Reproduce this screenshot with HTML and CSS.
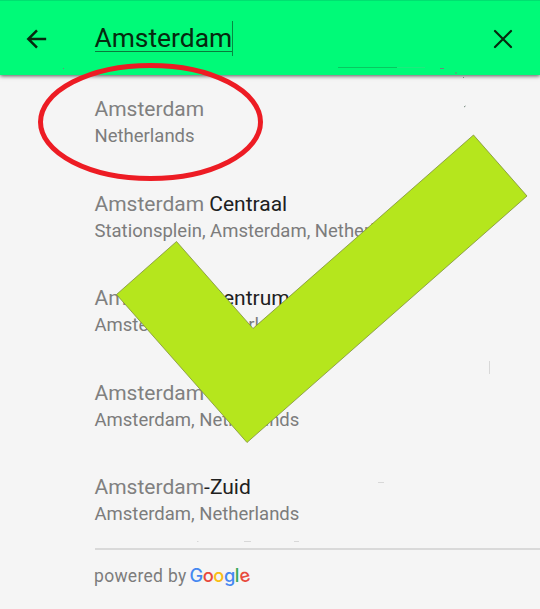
FILE: index.html
```html
<!DOCTYPE html>
<html lang="en">
<head>
<meta charset="utf-8">
<title>Place search</title>
<link rel="stylesheet" href="styles.css">
</head>
<body>
<div class="screen">
  <header class="bar">
    <svg class="icon back" viewBox="0 0 24 24"><path d="M22 12H3M12 2.5L2.5 12L12 21.5"/></svg>
    <div class="query"><span class="query-text">Amsterdam</span><span class="caret"></span></div>
    <svg class="icon close" viewBox="0 0 20 20"><path d="M2 2L18 18M18 2L2 18"/></svg>
  </header>
  <ul class="results">
    <li><div class="name">Amsterdam</div><div class="place">Netherlands</div></li>
    <li><div class="name">Amsterdam <b>Centraal</b></div><div class="place">Stationsplein, Amsterdam, Netherlands</div></li>
    <li><div class="name">Amsterdam <b>Centrum</b></div><div class="place">Amsterdam, Netherlands</div></li>
    <li><div class="name">Amsterdam</div><div class="place">Amsterdam, Netherlands</div></li>
    <li><div class="name">Amsterdam<b>-Zuid</b></div><div class="place">Amsterdam, Netherlands</div></li>
  </ul>
  <footer class="credit">
    <span class="powered">powered by</span>
    <span class="google"><span class="blue">G</span><span class="red">o</span><span class="yellow">o</span><span class="blue">g</span><span class="green">l</span><span class="red e">e</span></span>
  </footer>
  <svg class="marks" viewBox="0 0 540 609">
    <path class="check" d="M116.500 294.500L176.500 241.500L253 328.500L473.500 135L527 196L247 442.500Z"/>
    <ellipse class="ring" cx="150.500" cy="122" rx="110" ry="56.500"/>
    <path class="streak" d="M338 67.500H397"/>
    <path class="streak light" d="M397 67.500H425"/>
    <path class="speck" d="M440 68.500H444M455 73H457M463 77.500H464M464 107L465.500 106M63 68.500H64"/>
    <path class="dash" d="M489.500 361V374M378 482.500H384M197 541.500H198.500M244 541.500H251M294 541.500H299"/>
  </svg>
</div>
</body>
</html>
```
FILE: styles.css
```css
* { box-sizing: border-box; }
body { margin: 0; font-family: Roboto, sans-serif; }
.screen {
  position: relative;
  width: 540px;
  height: 609px;
  overflow: hidden;
  background: #f5f5f5;
}
.bar {
  display: flex;
  align-items: center;
  height: 75px;
  padding: 1px 27px 0 26px;
  background: #00fa78;
  border-top: 1px solid #00e070;
  box-shadow: 0 1px 4px rgba(0, 0, 0, .65);
}
.icon { fill: none; stroke: #06290f; }
.back { width: 22px; height: 22px; stroke-width: 2.7; }
.close { width: 20px; height: 20px; margin-left: auto; stroke-width: 2.2; stroke-linecap: round; }
.query {
  display: flex;
  align-items: center;
  margin-left: 46.500px;
  font-size: 26.400px;
  color: #06290f;
}
.query-text { height: 27px; line-height: 27px; border-bottom: 1px solid #087c3c; }
.caret { width: 1px; height: 35px; background: #078a42; }
.results { margin: 0; padding: 21px 0 0 94.500px; list-style: none; }
.results li { height: 94.600px; white-space: nowrap; }
.name { height: 28px; line-height: 26px; font-size: 21px; color: #808080; }
.name b { font-weight: 400; color: #202020; }
.place { height: 24px; line-height: 24px; font-size: 18.500px; color: #7c7c7c; }
.credit {
  display: flex;
  align-items: baseline;
  height: 61px;
  margin: -21px 0 0 94.500px;
  padding-top: 13px;
  border-top: 2px solid #d9d9d9;
  line-height: 24px;
}
.powered { width: 95.500px; margin-left: -.500px; font-size: 17.500px; color: #7c7c7c; letter-spacing: .300px; }
.google { font-family: Inter, sans-serif; font-size: 18.300px; font-weight: 500; letter-spacing: -.450px; }
.blue { color: #4688f1; }
.red { color: #e84a3d; }
.yellow { color: #f9bd14; }
.green { color: #38a858; }
.e { display: inline-block; transform: rotate(-15deg); }
.marks { position: absolute; inset: 0; width: 540px; height: 609px; fill: none; }
.marks .check { fill: #b5e61d; stroke: #7f8f3c; stroke-width: .8; }
.ring { stroke: #ed1c24; stroke-width: 5; }
.streak { stroke: #08c860; }
.light { stroke: #1deb7e; }
.speck { stroke: #72877a; }
.dash { stroke: #d8d8d8; }
```
